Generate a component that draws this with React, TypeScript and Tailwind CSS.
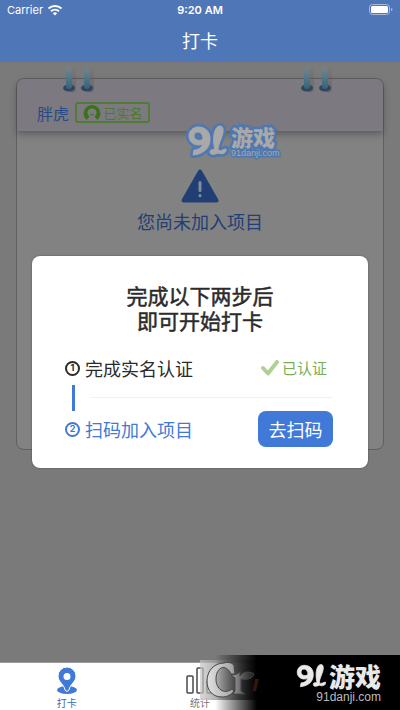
import React from "react";

const Logo91 = ({ className, outline }: { className: string; outline?: boolean }) => (
  <svg viewBox="0 0 40 34" className={className} aria-label="91" role="img">
    {[...(outline ? [true] : []), false].map((edge) => (
      <g
        key={String(edge)}
        fill={edge ? "#4f78b0" : "currentColor"}
        stroke={edge ? "#4f78b0" : "currentColor"}
        strokeWidth={edge ? 6 : 1}
        strokeLinejoin="round"
      >
        <path
          fillRule="evenodd"
          d="M11 3c8 0 12 5 12 12 0 9-6 15-17 16l1-5c4 0 7-2 9-6-7 3-14-1-14-8 0-5 4-9 9-9Zm0 5c-3 0-4 2-4 4 0 4 6 6 9 3 0-4-2-7-5-7Z"
        />
        <path d="M33 2c4 0 4 6 1 13-2 5-3 8-3 11 3 2 5-1 8-1 1 4-4 6-8 4-4 2-8 2-8-1 0-2 2-3 5-2C25 15 27 2 33 2Z" />
      </g>
    ))}
  </svg>
);

const Rings = () => (
  <svg viewBox="0 0 34 31" className="h-[31px] w-[34px]" aria-hidden="true">
    <defs>
      <linearGradient id="ring" x1="0" y1="0" x2="0" y2="1">
        <stop offset="0" stopColor="#6f8c96" stopOpacity="0.1" />
        <stop offset="0.5" stopColor="#52798a" />
        <stop offset="1" stopColor="#386178" />
      </linearGradient>
      <linearGradient id="ringShade" x1="0" y1="0" x2="0" y2="1">
        <stop offset="0" stopColor="#555" stopOpacity="0" />
        <stop offset="1" stopColor="#555" stopOpacity="0.5" />
      </linearGradient>
    </defs>
    {[0, 18].map((x) => (
      <g key={x} transform={`translate(${x} 0)`}>
        <path d="M8 3h5v23c0 3-3 4-6 3Z" fill="url(#ringShade)" />
        <ellipse cx="6" cy="25" rx="6" ry="3.500" fill="#2f475a" />
        <path d="M3 2h6v21c0 4-6 4-6 0Z" fill="url(#ring)" />
      </g>
    ))}
  </svg>
);

const Header = () => (
  <header className="h-[62px] bg-[#4f76b7] text-white">
    <div className="grid h-5 grid-cols-3 items-center px-[7px] font-[Inter,sans-serif] text-[11px]">
      <div className="flex items-center gap-1">
        <span>Carrier</span>
        <svg viewBox="0 0 16 12" className="h-3 w-4" fill="none" stroke="currentColor" strokeWidth="2" aria-hidden="true">
          <path d="M1.500 4.500a9.500 9.500 0 0 1 13 0M4 7.300a6 6 0 0 1 8 0" />
          <path d="M5.800 9.200a3.300 3.300 0 0 1 4.400 0L8 11.400Z" fill="currentColor" stroke="none" />
        </svg>
      </div>
      <span className="text-center font-semibold">9:20 AM</span>
      <svg viewBox="0 0 24 12" className="h-3 w-6 justify-self-end" aria-hidden="true">
        <rect x="0.500" y="0.500" width="20" height="10" rx="3" fill="none" stroke="#a7bbdb" />
        <rect x="2" y="2" width="17" height="7" rx="1.500" fill="#fff" />
        <path d="M22 4c2 0 2 3 0 3Z" fill="#a7bbdb" />
      </svg>
    </div>
    <h1 className="text-center text-lg leading-10">打卡</h1>
  </header>
);

const ProjectCard = () => (
  <section className="relative mx-4 mt-4 h-[372px] rounded-lg border border-[#606060] bg-[#828282]">
    <div className="flex h-[52px] items-end gap-1.5 rounded-t-lg bg-[#7c7a80] px-5 pb-[6px] shadow-[0_3px_7px_rgba(0,0,0,0.3)]">
      <span className="text-base leading-6 text-[#274a85]">胖虎</span>
      <span className="mb-0.5 flex h-[21px] w-[75px] items-center justify-center gap-[3px] rounded-[3px] border-2 border-[#507c34] text-[13px] text-[#4b7a2c]">
        <svg viewBox="0 0 18 16" className="h-4 w-[18px]" aria-hidden="true">
          <path d="M3.500 15a8.500 8.500 0 1 1 11 0l-3-3.500a4.500 4.500 0 1 0-5 0Z" fill="#3b7219" />
          <path d="M7 9q2 2 4 0" fill="none" stroke="#3b7219" />
        </svg>
        已实名
      </span>
    </div>
    <div className="flex flex-col items-center pt-[38px] text-[#213f75]">
      <svg viewBox="0 0 38 34" className="h-[34px] w-[38px]" aria-hidden="true">
        <path d="M19 2.500 35.500 31.500h-33Z" fill="currentColor" stroke="currentColor" strokeWidth="4" strokeLinejoin="round" />
        <path d="M19 13.500v8M19 26.500v.2" stroke="#858b98" strokeWidth="3" strokeLinecap="round" />
      </svg>
      <p className="mt-1.5 text-lg leading-6">您尚未加入项目</p>
    </div>
    <div className="absolute -top-4 left-[46px]"><Rings /></div>
    <div className="absolute -top-4 right-[48px]"><Rings /></div>
    <div className="absolute top-[45px] left-[170px] flex items-center text-[#a9a9a9]">
      <Logo91 outline className="h-[34px] w-10 overflow-visible" />
      <div className="ml-1 [paint-order:stroke_fill] [-webkit-text-stroke:5px_#4f78b0]">
        <p className="text-[22px] leading-6 font-black">游戏</p>
        <p className="font-['Liberation_Sans',sans-serif] text-[9px] leading-[10px] [-webkit-text-stroke:3px_#4f78b0]">91danji.com</p>
      </div>
    </div>
  </section>
);

const StepNumber = ({ n }: { n: number }) => (
  <span className="mr-[5px] ml-px flex h-[15px] w-[15px] items-center justify-center rounded-full border-2 border-current font-[Inter,sans-serif] text-[9px] font-bold">
    {n}
  </span>
);

const StepsDialog = () => (
  <div className="absolute inset-0 flex items-center px-8">
    <div role="dialog" aria-labelledby="steps-title" className="h-[212px] w-full rounded-lg bg-white pt-[27px] pr-[35px] pl-8 shadow-[0_0_2px_rgba(0,0,0,0.4)]">
      <h2 id="steps-title" className="-mr-[3px] text-center text-[21px] leading-[25px] font-normal text-[#2b2b2b] [-webkit-text-stroke:0.5px_currentColor]">
        完成以下两步后
        <br />
        即可开始打卡
      </h2>
      <ol className="mt-[17px]">
        <li className="flex h-9 items-center text-[#2b2b2b]">
          <StepNumber n={1} />
          <span className="flex-1 text-lg">完成实名认证</span>
          <svg viewBox="0 0 18 16" className="h-4 w-[18px]" fill="none" stroke="#b0d096" strokeWidth="4" aria-hidden="true">
            <path d="m2 8 5 5.500L16 2" strokeLinejoin="round" strokeLinecap="round" />
          </svg>
          <span className="mr-1.5 ml-[3px] text-[15px] text-[#79ae52]">已认证</span>
        </li>
        <li aria-hidden="true" className="flex h-[23px] items-center gap-[15px] pl-2">
          <span className="h-[26px] w-[3px] shrink-0 bg-[#4079d8]" />
          <span className="h-px flex-1 bg-[#f1f1f1]" />
        </li>
        <li className="flex h-10 items-center text-[#4079d8]">
          <StepNumber n={2} />
          <span className="flex-1 text-lg">扫码加入项目</span>
          <button type="button" className="h-9 w-[75px] rounded-lg bg-[#4079d8] text-lg text-white">去扫码</button>
        </li>
      </ol>
    </div>
  </div>
);

const TabBar = () => (
  <nav className="relative flex h-12 border-t border-[#999] bg-white text-[10px] leading-3">
    <button type="button" className="flex flex-1 flex-col items-center gap-[3px] pt-1 text-[#3a69bd]">
      <svg viewBox="0 0 20 27" className="h-[27px] w-5" aria-hidden="true">
        <ellipse cx="10" cy="23" rx="10" ry="4" fill="#4079d8" />
        <path d="M10 0a9 9 0 0 1 9 9c0 6-6 8-7 14q-2 3-4 0C7 17 1 15 1 9a9 9 0 0 1 9-9Z" fill="#4079d8" stroke="#fff" />
        <circle cx="10" cy="9.500" r="3.500" fill="#fff" />
      </svg>
      打卡
    </button>
    <button type="button" className="flex flex-1 flex-col items-center gap-[3px] pt-1 text-[#777]">
      <svg viewBox="0 0 28 27" className="h-[27px] w-7" fill="none" stroke="#484848" strokeWidth="1.500" aria-hidden="true">
        <rect x="1" y="9" width="6" height="17" rx="1" />
        <rect x="11" y="1" width="6" height="25" rx="1" />
        <rect x="21" y="14" width="6" height="12" rx="1" />
      </svg>
      统计
    </button>
    <div className="flex-1" />
    <div className="absolute right-0 bottom-0 h-[55px] w-[200px]">
      <div className="absolute top-[5px] left-0 h-10 w-[60px] bg-linear-to-r from-[#c8c8c8]/70 to-[#555]" />
      <div className="absolute inset-y-0 right-0 w-[185px] bg-linear-to-r from-transparent to-black to-[42px]" />
      <svg viewBox="0 0 56 40" className="absolute top-[5px] left-1.5 h-10 w-14" aria-hidden="true">
        <defs>
          <linearGradient id="seal" gradientUnits="userSpaceOnUse" x1="0" y1="0" x2="50" y2="0">
            <stop offset="0" stopColor="#e4e4e4" />
            <stop offset="0.500" stopColor="#aaa" />
            <stop offset="0.750" stopColor="#555" />
            <stop offset="1" stopColor="#111" />
          </linearGradient>
        </defs>
        <path d="M28 5c-3-3-7-3-10-2C8 3 1 11 1 21c0 10 6 16 15 16 5 0 9-2 12-6l-2-2C18 35 10 29 10 19 10 7 20 3 25 14h4Z" fill="url(#seal)" stroke="#444" />
        <path d="M25 15c5 0 6-1 9-3v4c4-6 11-4 14-2-2 5-7 6-13 5v12l4 3H27l2-3V18Z" fill="url(#seal)" stroke="#444" />
        <path d="M49 19h4l-3 12h-3Z" fill="#54240f" opacity="0.600" />
      </svg>
      <div className="absolute top-2 right-[19px] flex items-start text-[#e9e9e9]">
        <Logo91 className="mr-0.5 h-[26px] w-8" />
        <p className="text-[26px] leading-[26px] font-black">游戏</p>
      </div>
      <p className="absolute right-[19px] bottom-[6px] font-['Liberation_Sans',sans-serif] text-xs leading-[14px] text-[#bbb]">91danji.com</p>
    </div>
  </nav>
);

export default function App() {
  return (
    <div className="flex min-h-screen flex-col bg-[#7a7a7a] font-['Noto_Sans_CJK_SC',sans-serif]">
      <Header />
      <main className="relative flex-1">
        <div className="flow-root"><ProjectCard /></div>
        <StepsDialog />
      </main>
      <TabBar />
    </div>
  );
}
